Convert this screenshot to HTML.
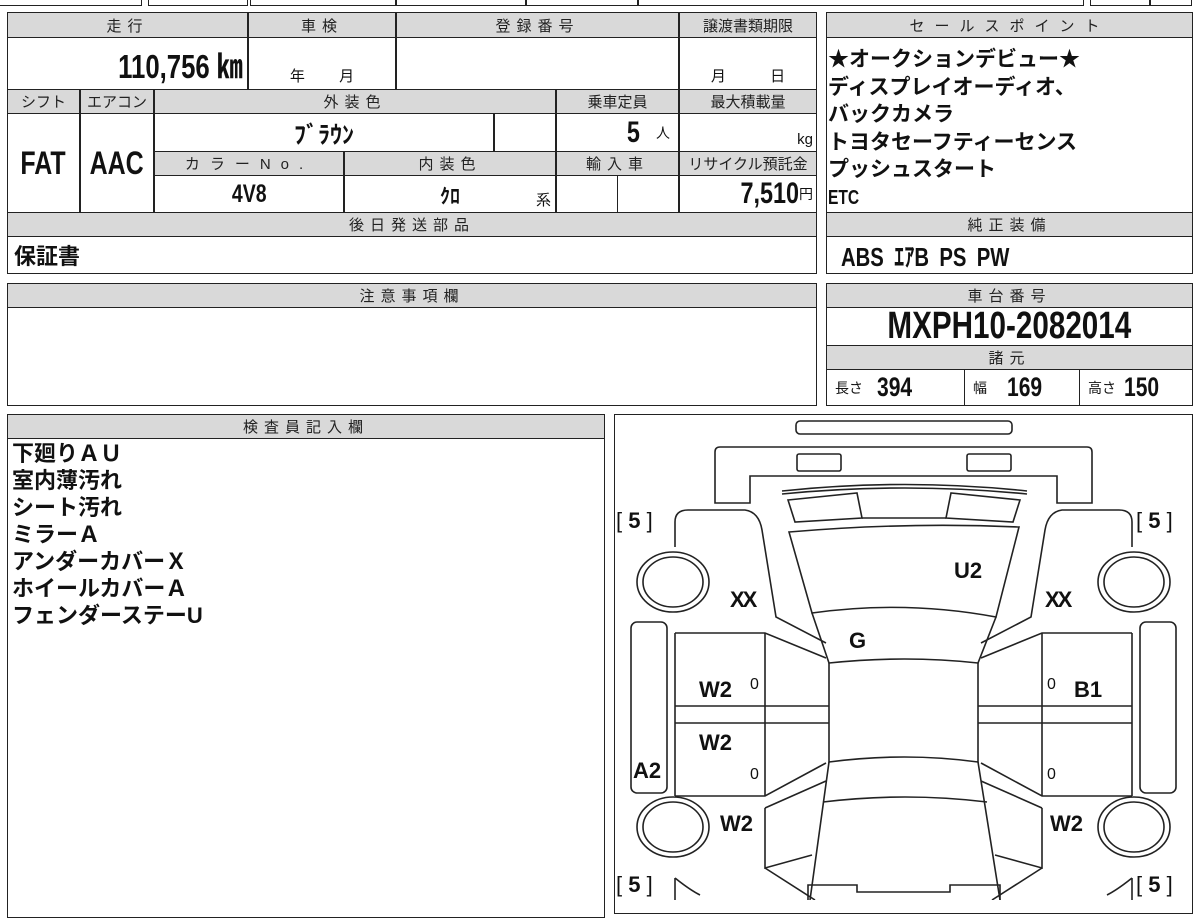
<!DOCTYPE html>
<html><head><meta charset="utf-8"><style>
body{margin:0;width:1200px;height:900px;background:#fff;position:relative;overflow:hidden;font-family:"Liberation Sans","Noto Sans CJK JP",sans-serif;color:#111}
.c{position:absolute;border:1.5px solid #222;box-sizing:border-box;display:flex;align-items:center;justify-content:center;white-space:nowrap}
.h{background:#d9d9d9;font-size:15px;letter-spacing:6px;color:#222}
.n{font-weight:bold}
.s{display:inline-block;transform:scaleX(.78)}
.sr{display:inline-block;transform:scaleX(.78);transform-origin:right center}
.sl{display:inline-block;transform:scaleX(.78);transform-origin:left center}
.b{font-weight:bold}
.t{position:absolute;white-space:nowrap}
</style></head><body>
<div class="c" style="left:-2px;top:-10px;width:144px;height:16px"></div>
<div class="c" style="left:148px;top:-10px;width:100px;height:16px"></div>
<div class="c" style="left:250px;top:-10px;width:146px;height:16px"></div>
<div class="c" style="left:396px;top:-10px;width:130px;height:16px"></div>
<div class="c" style="left:526px;top:-10px;width:112px;height:16px"></div>
<div class="c" style="left:638px;top:-10px;width:446px;height:16px"></div>
<div class="c" style="left:1090px;top:-10px;width:60px;height:16px"></div>
<div class="c" style="left:1150px;top:-10px;width:42px;height:16px"></div>

<div class="c h" style="left:7px;top:12px;width:241px;height:26px">走行</div>
<div class="c h" style="left:248px;top:12px;width:148px;height:26px">車検</div>
<div class="c h" style="left:396px;top:12px;width:283px;height:26px">登録番号</div>
<div class="c h" style="left:679px;top:12px;width:138px;height:26px;letter-spacing:0">譲渡書類期限</div>
<div class="c n" style="left:7px;top:37px;width:241px;height:53px;justify-content:flex-end;padding-right:4px;font-size:33px"><span class="sr">110,756 ㎞</span></div>
<div class="c" style="left:248px;top:37px;width:148px;height:53px;align-items:flex-end;padding-bottom:3px;font-size:15px;word-spacing:30px">年 月</div>
<div class="c" style="left:396px;top:37px;width:283px;height:53px"></div>
<div class="c" style="left:679px;top:37px;width:138px;height:53px;align-items:flex-end;padding-bottom:3px;font-size:15px;word-spacing:40px">月 日</div>

<div class="c h" style="left:7px;top:89px;width:73px;height:25px;letter-spacing:0">シフト</div>
<div class="c h" style="left:80px;top:89px;width:74px;height:25px;letter-spacing:0">エアコン</div>
<div class="c h" style="left:154px;top:89px;width:402px;height:25px">外装色</div>
<div class="c h" style="left:556px;top:89px;width:123px;height:25px;letter-spacing:0">乗車定員</div>
<div class="c h" style="left:679px;top:89px;width:138px;height:25px;letter-spacing:0">最大積載量</div>
<div class="c n" style="left:7px;top:113px;width:73px;height:100px;font-size:32px"><span class="s">FAT</span></div>
<div class="c n" style="left:80px;top:113px;width:74px;height:100px;font-size:32px"><span class="s">AAC</span></div>
<div class="c b" style="left:154px;top:113px;width:340px;height:39px;font-size:24px">ﾌﾞﾗｳﾝ</div>
<div class="c" style="left:494px;top:113px;width:62px;height:39px"></div>
<div class="c n" style="left:556px;top:113px;width:123px;height:39px;justify-content:flex-end;padding-right:8px;font-size:30px"><span class="s">5</span><span style="font-size:14px;font-weight:normal;margin-left:14px">人</span></div>
<div class="c" style="left:679px;top:113px;width:138px;height:39px;justify-content:flex-end;align-items:flex-end;padding:0 3px 3px 0;font-size:15px">kg</div>
<div class="c h" style="left:154px;top:151px;width:190px;height:25px;letter-spacing:10px">カラーNo.</div>
<div class="c h" style="left:344px;top:151px;width:212px;height:25px">内装色</div>
<div class="c h" style="left:556px;top:151px;width:123px;height:25px">輸入車</div>
<div class="c h" style="left:679px;top:151px;width:138px;height:25px;letter-spacing:0">リサイクル預託金</div>
<div class="c n" style="left:154px;top:175px;width:190px;height:38px;font-size:25px"><span class="s">4V8</span></div>
<div class="c b" style="left:344px;top:175px;width:212px;height:38px;font-size:20px">ｸﾛ<span style="position:absolute;right:4px;bottom:2px;font-size:15px;font-weight:normal">系</span></div>
<div class="c" style="left:556px;top:175px;width:62px;height:38px"></div>
<div class="c" style="left:617px;top:175px;width:62px;height:38px"></div>
<div class="c n" style="left:679px;top:175px;width:138px;height:38px;justify-content:flex-end;padding-right:3px;font-size:30px"><span class="sr">7,510</span><span style="font-size:14px;font-weight:normal">円</span></div>
<div class="c h" style="left:7px;top:212px;width:810px;height:25px">後日発送部品</div>
<div class="c b" style="left:7px;top:236px;width:810px;height:38px;justify-content:flex-start;padding-left:6px;font-size:22px">保証書</div>

<div class="c h" style="left:826px;top:12px;width:367px;height:26px;letter-spacing:10px">セールスポイント</div>
<div class="c" style="left:826px;top:37px;width:367px;height:176px"></div>
<div class="t b" style="left:828px;top:46px;font-size:21px;line-height:27.5px">★オークションデビュー★<br>ディスプレイオーディオ、<br>バックカメラ<br>トヨタセーフティーセンス<br>プッシュスタート<br><span class="sl" style="font-size:20px">ETC</span></div>
<div class="c h" style="left:826px;top:212px;width:367px;height:25px">純正装備</div>
<div class="c n" style="left:826px;top:236px;width:367px;height:38px;justify-content:flex-start;padding-left:14px;font-size:26px;word-spacing:6px"><span class="sl">ABS ｴｱB PS PW</span></div>

<div class="c h" style="left:7px;top:283px;width:810px;height:25px">注意事項欄</div>
<div class="c" style="left:7px;top:307px;width:810px;height:99px"></div>
<div class="c h" style="left:826px;top:283px;width:367px;height:25px">車台番号</div>
<div class="c n" style="left:826px;top:307px;width:367px;height:39px;font-size:38px"><span class="s">MXPH10-2082014</span></div>
<div class="c h" style="left:826px;top:345px;width:367px;height:25px">諸元</div>
<div class="c n" style="left:826px;top:369px;width:139px;height:37px;justify-content:flex-start;padding-left:8px;font-size:27px"><span style="font-size:14px;font-weight:normal;margin-right:14px">長さ</span><span class="sl">394</span></div>
<div class="c n" style="left:964px;top:369px;width:116px;height:37px;justify-content:flex-start;padding-left:8px;font-size:27px"><span style="font-size:14px;font-weight:normal;margin-right:20px">幅</span><span class="sl">169</span></div>
<div class="c n" style="left:1079px;top:369px;width:114px;height:37px;justify-content:flex-start;padding-left:8px;font-size:27px"><span style="font-size:14px;font-weight:normal;margin-right:8px">高さ</span><span class="sl">150</span></div>

<div class="c h" style="left:7px;top:414px;width:598px;height:25px">検査員記入欄</div>
<div class="c" style="left:7px;top:438px;width:598px;height:480px"></div>
<div class="t b" style="left:12px;top:440px;font-size:22px;line-height:27px">下廻りＡＵ<br>室内薄汚れ<br>シート汚れ<br>ミラーＡ<br>アンダーカバーＸ<br>ホイールカバーＡ<br>フェンダーステーU</div>

<div class="c" style="left:614px;top:414px;width:579px;height:500px"></div>
<svg style="position:absolute;left:0;top:0" width="1200" height="900" fill="none" stroke="#222" stroke-width="1.6">
<rect x="796" y="421" width="216" height="13" rx="4"/>
<path d="M715,503 V452 Q715,447 720,447 H1087 Q1092,447 1092,452 V503 H1057 V476 H750 V503 Z"/>
<rect x="797" y="454" width="44" height="17" rx="2"/>
<rect x="967" y="454" width="44" height="17" rx="2"/>
<path d="M782,491 Q905,478 1027,491"/>
<path d="M782,494 Q905,482 1027,494"/>
<path d="M788,500 L857,493 L862,518 L795,522 Z"/>
<path d="M1020,500 L951,493 L946,518 L1013,522 Z"/>
<path d="M862,518 H946"/>
<path d="M789,532 Q905,522 1019,527 L996,617 Q905,600 812,613 Z"/>
<path d="M812,613 L829,663 Q905,655 978,663 L996,617"/>
<path d="M829,663 V762 Q905,752 978,762 V663"/>
<path d="M829,762 L810,900 M978,762 L1000,900"/>
<path d="M823,802 Q905,792 987,802"/>
<path d="M675,547 V522 Q675,510 688,510 H745 Q759,512 762,530 L776,617 L826,643"/>
<path d="M675,633 H765 L826,658"/>
<path d="M675,633 V796"/>
<path d="M765,633 V796"/>
<path d="M675,706 H829 M675,723 H829"/>
<path d="M675,796 H765 L826,763"/>
<path d="M765,808 L826,781"/>
<path d="M765,808 V868 L812,855"/>
<path d="M675,878 V900"/>
<path d="M675,878 Q690,890 700,895 M765,868 L815,900"/>
<path d="M1132,547 V522 Q1132,510 1119,510 H1062 Q1048,512 1045,530 L1031,617 L981,643"/>
<path d="M1132,633 H1042 L981,658"/>
<path d="M1132,633 V796"/>
<path d="M1042,633 V796"/>
<path d="M1132,706 H978 M1132,723 H978"/>
<path d="M1132,796 H1042 L981,763"/>
<path d="M1042,808 L981,781"/>
<path d="M1042,808 V868 L995,855"/>
<path d="M1132,878 V900"/>
<path d="M1132,878 Q1117,890 1107,895 M1042,868 L992,900"/>
<ellipse cx="673" cy="582" rx="36" ry="30"/><ellipse cx="673" cy="582" rx="30" ry="25"/>
<ellipse cx="673" cy="827" rx="36" ry="30"/><ellipse cx="673" cy="827" rx="30" ry="25"/>
<ellipse cx="1134" cy="582" rx="36" ry="30"/><ellipse cx="1134" cy="582" rx="30" ry="25"/>
<ellipse cx="1134" cy="827" rx="36" ry="30"/><ellipse cx="1134" cy="827" rx="30" ry="25"/>
<rect x="631" y="622" width="36" height="171" rx="6"/>
<rect x="1140" y="622" width="36" height="171" rx="6"/>
<path d="M808,900 V885 H857 V892 H950 V885 H1000 V900"/>
</svg>
<div class="t" style="left:616px;top:508px;font-size:22px">[ <b>5</b> ]</div>
<div class="t" style="left:1136px;top:508px;font-size:22px">[ <b>5</b> ]</div>
<div class="t" style="left:616px;top:872px;font-size:22px">[ <b>5</b> ]</div>
<div class="t" style="left:1136px;top:872px;font-size:22px">[ <b>5</b> ]</div>
<div class="t b" style="left:730px;top:587px;font-size:22px;letter-spacing:-2px">XX</div>
<div class="t b" style="left:954px;top:558px;font-size:22px">U2</div>
<div class="t b" style="left:1045px;top:587px;font-size:22px;letter-spacing:-2px">XX</div>
<div class="t b" style="left:849px;top:628px;font-size:22px">G</div>
<div class="t b" style="left:699px;top:677px;font-size:22px">W2</div>
<div class="t" style="left:750px;top:676px;font-size:16px">0</div>
<div class="t" style="left:1047px;top:676px;font-size:16px">0</div>
<div class="t b" style="left:1074px;top:677px;font-size:22px">B1</div>
<div class="t b" style="left:699px;top:730px;font-size:22px">W2</div>
<div class="t b" style="left:633px;top:758px;font-size:22px">A2</div>
<div class="t" style="left:750px;top:766px;font-size:16px">0</div>
<div class="t" style="left:1047px;top:766px;font-size:16px">0</div>
<div class="t b" style="left:720px;top:811px;font-size:22px">W2</div>
<div class="t b" style="left:1050px;top:811px;font-size:22px">W2</div>
</body></html>
